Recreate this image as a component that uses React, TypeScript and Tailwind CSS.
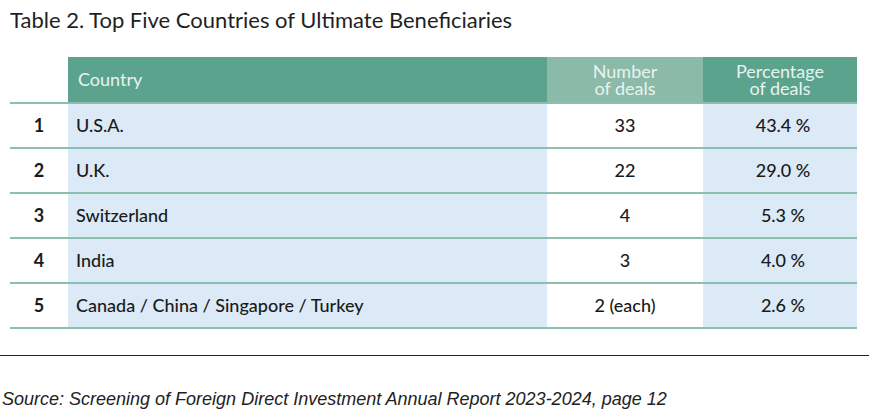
const rows = [
  { n: '1', country: 'U.S.A.', deals: '33', pct: '43.4 %' },
  { n: '2', country: 'U.K.', deals: '22', pct: '29.0 %' },
  { n: '3', country: 'Switzerland', deals: '4', pct: '5.3 %' },
  { n: '4', country: 'India', deals: '3', pct: '4.0 %' },
  { n: '5', country: 'Canada / China / Singapore / Turkey', deals: '2 (each)', pct: '2.6 %' },
]

export default function App() {
  return (
    <div className="w-[869px] h-[418px] bg-white overflow-hidden font-['Lato','Noto_Sans',sans-serif]">
      <h1 className="pl-[10px] pt-[7px] text-[22px] leading-[26px] text-[#1f1f1f]">
        Table 2. Top Five Countries of Ultimate Beneficiaries
      </h1>

      <div className="ml-[10px] mt-[24px] w-[847px]">
        {/* header */}
        <div className="grid grid-cols-[58px_479px_156px_154px] h-[45px] text-[18px] text-[#e6f3ee]">
          <div className="bg-white" />
          <div className="bg-[#5ca38e] flex items-center pl-[10px]">Country</div>
          <div className="bg-[#8bbaa9] flex flex-col items-center justify-center leading-[17px]">
            <span>Number</span>
            <span>of deals</span>
          </div>
          <div className="bg-[#5ca38e] flex flex-col items-center justify-center leading-[17px]">
            <span>Percentage</span>
            <span>of deals</span>
          </div>
        </div>

        {rows.map((r) => (
          <div
            key={r.n}
            className="grid grid-cols-[58px_479px_156px_154px] h-[45px] border-t-2 border-[#8cbfb0] text-[18px] text-[#1a1a1a]"
          >
            <div className="flex items-center justify-center font-bold">{r.n}</div>
            <div className="bg-[#dceaf7] flex items-center pl-[8px] font-medium">{r.country}</div>
            <div className="flex items-center justify-center font-medium">{r.deals}</div>
            <div className="bg-[#dceaf7] flex items-center justify-center pl-[6px] font-medium">{r.pct}</div>
          </div>
        ))}
        <div className="border-t-2 border-[#8cbfb0]" />
      </div>

      <div className="mt-[26px] border-t border-[#222]" />

      <p className="pl-[2px] mt-[32px] italic text-[18px] leading-[22px] text-[#222] font-['Liberation_Sans',Arial,sans-serif]">
        Source: Screening of Foreign Direct Investment Annual Report 2023-2024, page 12
      </p>
    </div>
  )
}
